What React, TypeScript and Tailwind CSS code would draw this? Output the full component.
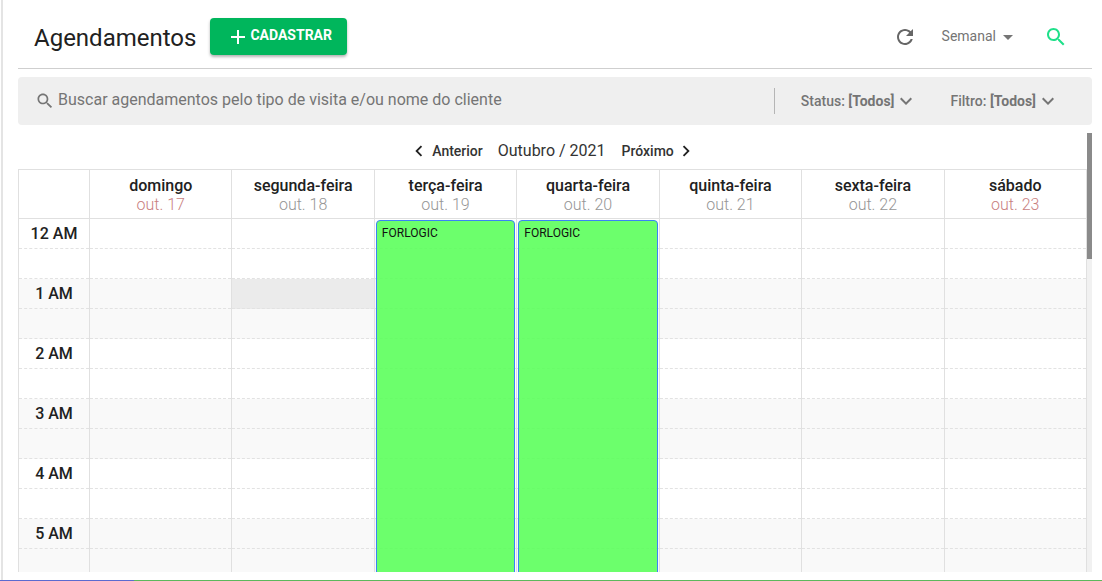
const icons = {
  plus: "M19 13h-6v6h-2v-6H5v-2h6V5h2v6h6v2z",
  search: "M15.5 14h-.79l-.28-.27C15.41 12.59 16 11.11 16 9.5 16 5.91 13.09 3 9.5 3S3 5.91 3 9.5 5.91 16 9.5 16c1.61 0 3.09-.59 4.23-1.57l.27.28v.79l5 4.99L20.49 19l-4.99-5zm-6 0C7.01 14 5 11.99 5 9.5S7.01 5 9.5 5 14 7.01 14 9.5 11.99 14 9.5 14z",
  refresh: "M17.65 6.35C16.2 4.9 14.21 4 12 4c-4.42 0-7.99 3.58-7.99 8s3.57 8 7.99 8c3.73 0 6.84-2.55 7.73-6h-2.08c-.82 2.33-3.04 4-5.65 4-3.31 0-6-2.69-6-6s2.69-6 6-6c1.66 0 3.14.69 4.22 1.78L13 11h7V4l-2.35 2.35z",
  caret: "M7 10l5 5 5-5z",
  down: "M16.59 8.59 12 13.17 7.41 8.59 6 10l6 6 6-6z",
  left: "M15.41 7.41 14 6l-6 6 6 6 1.41-1.41L10.83 12z",
  right: "M10 6 8.59 7.41 13.17 12l-4.58 4.59L10 18l6-6z",
}

function Icon({ name, className }: { name: keyof typeof icons; className: string }) {
  return (
    <svg viewBox="0 0 24 24" fill="currentColor" className={className}>
      <path d={icons[name]} />
    </svg>
  )
}

const days = [
  { name: "domingo", date: "out. 17", weekend: true },
  { name: "segunda-feira", date: "out. 18" },
  { name: "terça-feira", date: "out. 19", event: true },
  { name: "quarta-feira", date: "out. 20", event: true },
  { name: "quinta-feira", date: "out. 21" },
  { name: "sexta-feira", date: "out. 22" },
  { name: "sábado", date: "out. 23", weekend: true },
]

const hours = ["12 AM", "1 AM", "2 AM", "3 AM", "4 AM", "5 AM"]

function Filter({ label }: { label: string }) {
  return (
    <div className="flex items-center text-[14px] font-medium text-[#757575]">
      <span>{label}:&nbsp;</span>
      <span className="font-bold">[Todos]</span>
      <Icon name="down" className="h-6 w-6" />
    </div>
  )
}

function Slot({ hour, active }: { hour: number; active?: boolean }) {
  const bg = active ? "bg-[#ebebeb]" : hour % 2 === 1 ? "bg-[#f9f9f9]" : "bg-white"
  return <div className={`h-[30px] border-b border-dashed border-[#e2e2e2] ${bg}`} />
}

export default function App() {
  return (
    <div className="h-[581px] overflow-hidden bg-white font-['Roboto',sans-serif]">
      <div className="ml-px h-[580px] overflow-hidden border-l-2 border-[#e4e4e4] pl-[15px] pr-[10px]">
        <header className="flex h-[69px] items-center border-b border-[#cfcfcf] pl-[16px] pt-[5px]">
          <h1 className="mt-[2px] text-[24px] text-[#212121]">Agendamentos</h1>
          <button className="ml-[14px] flex h-[37px] w-[137px] items-center rounded bg-[#00b65c] pl-[16px] text-[14px] font-bold text-white shadow-[0_2px_3px_rgba(0,0,0,0.3)]">
            <Icon name="plus" className="h-6 w-6" />
            <span className="-mt-[3px]">CADASTRAR</span>
          </button>
          <div className="ml-auto flex items-center">
            <Icon name="refresh" className="h-6 w-6 text-[#666666]" />
            <div className="ml-[25px] flex items-center text-[14px] text-[#757575]">
              Semanal
              <Icon name="caret" className="h-6 w-6" />
            </div>
            <Icon name="search" className="ml-[24px] mr-[24px] h-6 w-6 text-[#1fe08a]" />
          </div>
        </header>

        <div className="mt-[8px] flex h-[48px] items-center rounded bg-[#efefef] pl-[17px]">
          <Icon name="search" className="h-5 w-5 text-[#757575]" />
          <span className="ml-[3px] -mt-[2px] text-[16px] text-[#757575]">Buscar agendamentos pelo tipo de visita e/ou nome do cliente</span>
          <div className="ml-auto flex items-center pr-[32px]">
            <div className="mr-[26px] h-[26px] w-px bg-[#b5b5b5]" />
            <Filter label="Status" />
            <div className="w-[32px]" />
            <Filter label="Filtro" />
          </div>
        </div>

        <div className="mt-[8px] flex h-[439px] items-start">
          <div className="w-[1069px]">
            <div className="flex h-[36px] items-center justify-center">
              <Icon name="left" className="h-[22px] w-[22px] text-[#212121]" />
              <span className="ml-[2px] text-[14px] font-medium text-[#333333]">Anterior</span>
              <span className="ml-[15px] mr-[16px] text-[16px] text-[#333333]">Outubro / 2021</span>
              <span className="text-[14px] font-medium text-[#333333]">Próximo</span>
              <Icon name="right" className="ml-px h-[22px] w-[22px] text-[#212121]" />
            </div>

            <div className="grid grid-cols-[71px_repeat(7,1fr)] border-y border-r border-[#e0e0e0]">
              <div className="h-[48px] border-l border-[#e0e0e0]" />
              {days.map((d) => (
                <div key={d.name} className="flex h-[48px] flex-col items-center justify-center border-l border-[#e0e0e0] pt-px leading-[19px]">
                  <span className="text-[16px] font-medium text-[#212121]">{d.name}</span>
                  <span className={`text-[16px] font-light ${d.weekend ? "text-[#c97f7f]" : "text-[#969696]"}`}>{d.date}</span>
                </div>
              ))}
            </div>

            <div className="grid h-[353px] grid-cols-[71px_repeat(7,1fr)] overflow-hidden border-r border-[#e0e0e0]">
              <div className="border-l border-[#e0e0e0]">
                {hours.map((h, i) => (
                  <div key={h}>
                    <div className={`flex h-[30px] items-center justify-center border-b border-dashed border-[#e2e2e2] text-[16px] font-medium text-[#212121] ${i % 2 === 1 ? "bg-[#f9f9f9]" : "bg-white"}`}>
                      {h}
                    </div>
                    <Slot hour={i} />
                  </div>
                ))}
              </div>
              {days.map((d, col) => (
                <div key={d.name} className="relative border-l border-[#e0e0e0]">
                  {hours.map((h, i) => (
                    <div key={h}>
                      <Slot hour={i} active={col === 1 && i === 1} />
                      <Slot hour={i} />
                    </div>
                  ))}
                  {d.event && (
                    <div className="absolute -bottom-[10px] left-[1px] right-[1px] top-[1px] rounded-[4px] border border-[#3b82f6] bg-[#5cff5c]/90 px-[5px] py-[5px] text-[12px] leading-[14px] text-[#111111]">
                      FORLOGIC
                    </div>
                  )}
                </div>
              ))}
            </div>
          </div>
          <div className="h-[439px] w-[5px] bg-[#f1f1f1]">
            <div className="h-[126px] bg-[#8a8a8a]" />
          </div>
        </div>
      </div>
      <div className="flex h-px">
        <div className="w-[134px] bg-[#5b6bd0]" />
        <div className="flex-1 bg-[#5cb85c]" />
      </div>
    </div>
  )
}
